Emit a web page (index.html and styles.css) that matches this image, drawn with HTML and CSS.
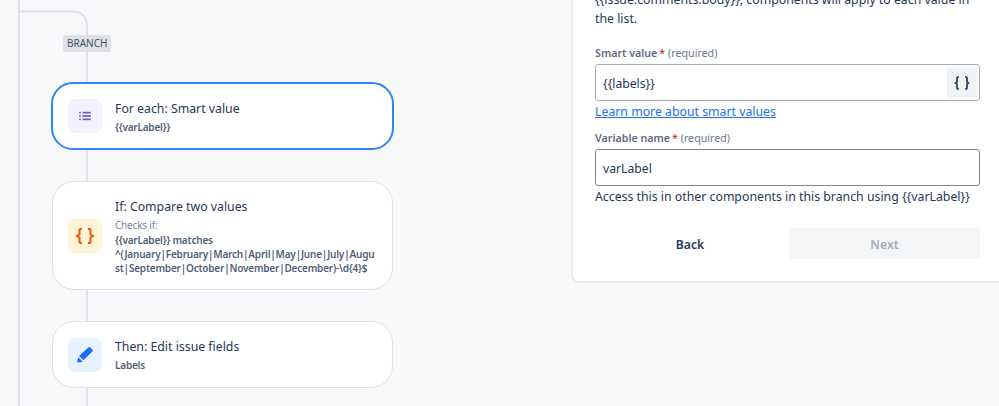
FILE: index.html
```html
<!DOCTYPE html>
<html lang="en">
<head>
<meta charset="utf-8">
<title>Automation rule</title>
<link rel="stylesheet" href="styles.css">
</head>
<body>
<div class="page">
  <svg class="wires" width="120" height="406" viewBox="0 0 120 406" aria-hidden="true">
    <path d="M19 0V406" />
    <path d="M19 11.500H72Q87 11.500 87 27V406" />
  </svg>
  <span class="branch">BRANCH</span>
  <section class="flow">
    <article class="card card-active">
      <span class="tile tile-purple">
        <svg width="12" height="10" viewBox="0 0 14 12"><g fill="#6e5dc6"><rect x="0" y="1" width="2" height="2"/><rect x="0" y="5" width="2" height="2"/><rect x="0" y="9" width="2" height="2"/><rect x="4" y="1" width="10" height="2"/><rect x="4" y="5" width="10" height="2"/><rect x="4" y="9" width="10" height="2"/></g></svg>
      </span>
      <div class="body">
        <h3>For each: Smart value</h3>
        <p class="strong">{{varLabel}}</p>
      </div>
    </article>
    <article class="card card-tall">
      <span class="tile tile-yellow">
        <svg width="20" height="16" viewBox="0 0 20 16"><g fill="none" stroke="#e2590f" stroke-width="2"><path d="M7 1H5.500a1 1 0 0 0-1 1V6.500L2 8L4.500 9.500V14a1 1 0 0 0 1 1H7"/><path d="M13 1H14.500a1 1 0 0 1 1 1V6.500L18 8L15.500 9.500V14a1 1 0 0 1-1 1H13"/></g></svg>
      </span>
      <div class="body">
        <h3>If: Compare two values</h3>
        <p class="muted">Checks if:</p>
        <p class="strong">{{varLabel}} matches<br>^(January|February|March|April|May|June|July|August|September|October|November|December)-\d{4}$</p>
      </div>
    </article>
    <article class="card">
      <span class="tile tile-blue">
        <svg width="16" height="16" viewBox="0 0 16 16"><path fill="#1d6ff2" d="M11.300 0.600a1.500 1.500 0 0 1 2.100 0l1.900 1.900a1.500 1.500 0 0 1 0 2.100l-8.800 8.700-4.500-4.300zM1.300 10.300l4.300 4.200-1.500 0.700H0z"/></svg>
      </span>
      <div class="body">
        <h3>Then: Edit issue fields</h3>
        <p class="strong">Labels</p>
      </div>
    </article>
  </section>
  <aside class="panel">
    <p class="intro">{{issue.comments.body}}, components will apply to each value in the list.</p>
    <label class="label">Smart value<span class="req">*</span> <span class="opt">(required)</span></label>
    <div class="input">
      <span class="value">{{labels}}</span>
      <span class="brace-btn">
        <svg width="16" height="14" viewBox="0 0 16 14"><g fill="none" stroke="#253858" stroke-width="1.700"><path d="M5 1H4a1 1 0 0 0-1 1V5.800L1.500 7L3 8.200V12a1 1 0 0 0 1 1H5"/><path d="M11 1H12a1 1 0 0 1 1 1V5.800L14.500 7L13 8.200V12a1 1 0 0 1-1 1H11"/></g></svg>
      </span>
    </div>
    <a class="link" href="#">Learn more about smart values</a>
    <label class="label label-second">Variable name<span class="req">*</span> <span class="opt">(required)</span></label>
    <div class="input input-plain"><span class="value">varLabel</span></div>
    <p class="help">Access this in other components in this branch using {{varLabel}}</p>
    <div class="actions">
      <button class="btn btn-back" type="button">Back</button>
      <button class="btn btn-next" type="button">Next</button>
    </div>
  </aside>
</div>
</body>
</html>
```
FILE: styles.css
```css
* { box-sizing: border-box; }
html, body { margin: 0; height: 100%; }
body {
  background: #f7f8f9;
  font-family: "Noto Sans", "Open Sans", sans-serif;
  color: #253858;
  overflow: hidden;
}
.page {
  position: relative;
  width: 999px;
  height: 406px;
  overflow: hidden;
  display: flex;
  align-items: flex-start;
}
.wires {
  position: absolute;
  left: 0;
  top: 0;
}
.wires path {
  fill: none;
  stroke: #dfe1e6;
  stroke-width: 2;
}
.flow {
  position: relative;
  flex: none;
  width: 342px;
  margin-left: 52px;
  padding-top: 82px;
  display: flex;
  flex-direction: column;
  gap: 31px;
}
.branch {
  position: absolute;
  left: 63px;
  top: 35px;
  height: 17px;
  padding: 0 4px;
  border-radius: 3px;
  background: #dfe1e6;
  color: #42526e;
  font-size: 10px;
  line-height: 17px;
}
.card {
  display: flex;
  align-items: center;
  gap: 13px;
  width: 341px;
  height: 67px;
  padding: 0 15px;
  background: #fff;
  border: 1px solid #dfe1e6;
  border-radius: 22px;
}
.card-active {
  width: 343px;
  height: 68px;
  margin-left: -1px;
  border: 2px solid #2f85f5;
}
.card-tall { height: 109px; }
.tile {
  flex: none;
  width: 34px;
  height: 34px;
  border-radius: 8px;
  display: flex;
  align-items: center;
  justify-content: center;
}
.tile-purple { background: #f3f0ff; }
.tile-yellow { background: #fff4d6; }
.tile-blue { background: #e6f1ff; }
.body { min-width: 0; flex: 1; padding-top: 2px; }
.card-tall .body { padding-top: 3px; }
h3 {
  margin: 0 0 2px;
  font-size: 12.300px;
  line-height: 18px;
  font-weight: 400;
  color: #253858;
}
.body p {
  margin: 0;
  font-size: 10px;
  letter-spacing: -0.2px;
  line-height: 14.300px;
  word-break: break-all;
}
.strong { font-weight: 600; color: #505f79; }
.muted { color: #7a869a; }
.panel {
  flex: none;
  margin-left: 177px;
  margin-top: -12px;
  width: 440px;
  height: 295px;
  padding: 0 19px 0 22px;
  background: #fff;
  border: 2px solid #ebecf0;
  border-radius: 0 0 0 8px;
}
.intro {
  width: 385px;
  margin: 0;
  font-size: 12.300px;
  line-height: 19px;
  color: #253858;
}
.label {
  display: block;
  margin-top: 17px;
  height: 16px;
  font-size: 10.700px;
  line-height: 16px;
  font-weight: 600;
  color: #5e6c84;
}
.label-second { margin-top: 9px; }
.req { color: #bf2600; font-weight: 400; margin-left: 2px; }
.opt { color: #6b778c; font-weight: 400; }
.input {
  display: flex;
  align-items: center;
  justify-content: space-between;
  width: 385px;
  height: 37px;
  margin-top: 3px;
  padding: 0 2px 0 7px;
  border: 1px solid #a5adba;
  border-radius: 3px;
  font-size: 12.200px;
  color: #253858;
}
.value { padding-top: 2px; }
.input-plain { border-color: #7a869a; }
.brace-btn {
  width: 30px;
  height: 30px;
  border-radius: 3px;
  background: #f1f2f4;
  display: flex;
  align-items: center;
  justify-content: center;
}
.link {
  display: block;
  margin-top: 2px;
  font-size: 12.300px;
  line-height: 18px;
  color: #1d6ff2;
  text-decoration: underline;
}
.help {
  margin: 2px 0 0;
  font-size: 12.300px;
  line-height: 18px;
  color: #253858;
  white-space: nowrap;
}
.actions {
  display: grid;
  grid-template-columns: 190px 191px;
  gap: 4px;
  width: 385px;
  margin-top: 22px;
}
.btn {
  height: 31px;
  padding: 2px 0 0;
  border: 0;
  border-radius: 3px;
  font: 600 12.200px "Noto Sans", "Open Sans", sans-serif;
  background: none;
}
.btn-back { color: #253858; }
.btn-next { background: #f4f5f7; color: #a5adba; }
```
